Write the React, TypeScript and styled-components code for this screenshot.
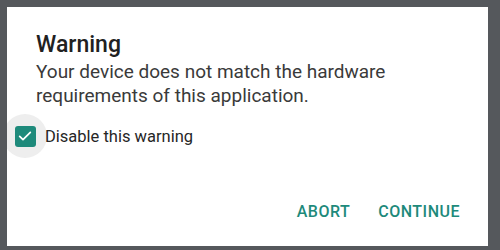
import React from "react";
import styled, { createGlobalStyle } from "styled-components";

const Global = createGlobalStyle`
  html, body { margin: 0; padding: 0; background: #55585c; }
  body { width: 500px; height: 250px; overflow: hidden; font-family: Roboto, "Noto Sans", sans-serif; }
`;

const Backdrop = styled.div`
  width: 500px;
  height: 250px;
  box-sizing: border-box;
  padding: 7px 12px 4px 7px;
  display: flex;
`;

const Dialog = styled.div`
  flex: 1;
  background: #ffffff;
  display: flex;
  flex-direction: column;
  padding: 24px 0 0 0;
  box-sizing: border-box;
  overflow: hidden;
`;

const Title = styled.h1`
  margin: 0 0 0 29px;
  font-size: 23px;
  font-weight: 500;
  line-height: 28px;
  color: #212121;
`;

const Message = styled.p`
  margin: 1px 0 0 29px;
  font-size: 19px;
  font-weight: 400;
  line-height: 24px;
  color: #3a3a3a;
`;

const CheckRow = styled.label`
  display: flex;
  align-items: center;
  margin-top: 6px;
  height: 44px;
`;

const Ripple = styled.span`
  width: 44px;
  height: 44px;
  border-radius: 50%;
  background: #eeeeee;
  display: flex;
  align-items: center;
  justify-content: center;
  margin-left: -4px;
  flex-shrink: 0;
`;

const Box = styled.span`
  width: 21px;
  height: 21px;
  border-radius: 3px;
  background: #1e8a7b;
  display: flex;
  align-items: center;
  justify-content: center;
`;

const CheckLabel = styled.span`
  margin-left: -2px;
  font-size: 16.5px;
  color: #262626;
`;

const Actions = styled.div`
  margin-top: auto;
  display: flex;
  justify-content: flex-end;
  gap: 12px;
  padding: 0 20px 17px 0;
`;

const ActionButton = styled.button`
  border: none;
  background: transparent;
  padding: 8px 8px;
  font-family: Roboto, sans-serif;
  font-size: 16px;
  font-weight: 500;
  letter-spacing: 0.5px;
  color: #1e8a7b;
  text-transform: uppercase;
`;

export default function App() {
  return (
    <>
      <Global />
      <Backdrop>
        <Dialog>
          <Title>Warning</Title>
          <Message>
            Your device does not match the hardware
            <br />
            requirements of this application.
          </Message>
          <CheckRow>
            <Ripple>
              <Box>
                <svg width="16" height="16" viewBox="0 0 24 24" fill="none">
                  <path d="M4 12.5l5 5L20 6.5" stroke="#fff" strokeWidth="2.6" strokeLinecap="round" strokeLinejoin="round" />
                </svg>
              </Box>
            </Ripple>
            <CheckLabel>Disable this warning</CheckLabel>
          </CheckRow>
          <Actions>
            <ActionButton>Abort</ActionButton>
            <ActionButton>Continue</ActionButton>
          </Actions>
        </Dialog>
      </Backdrop>
    </>
  );
}
